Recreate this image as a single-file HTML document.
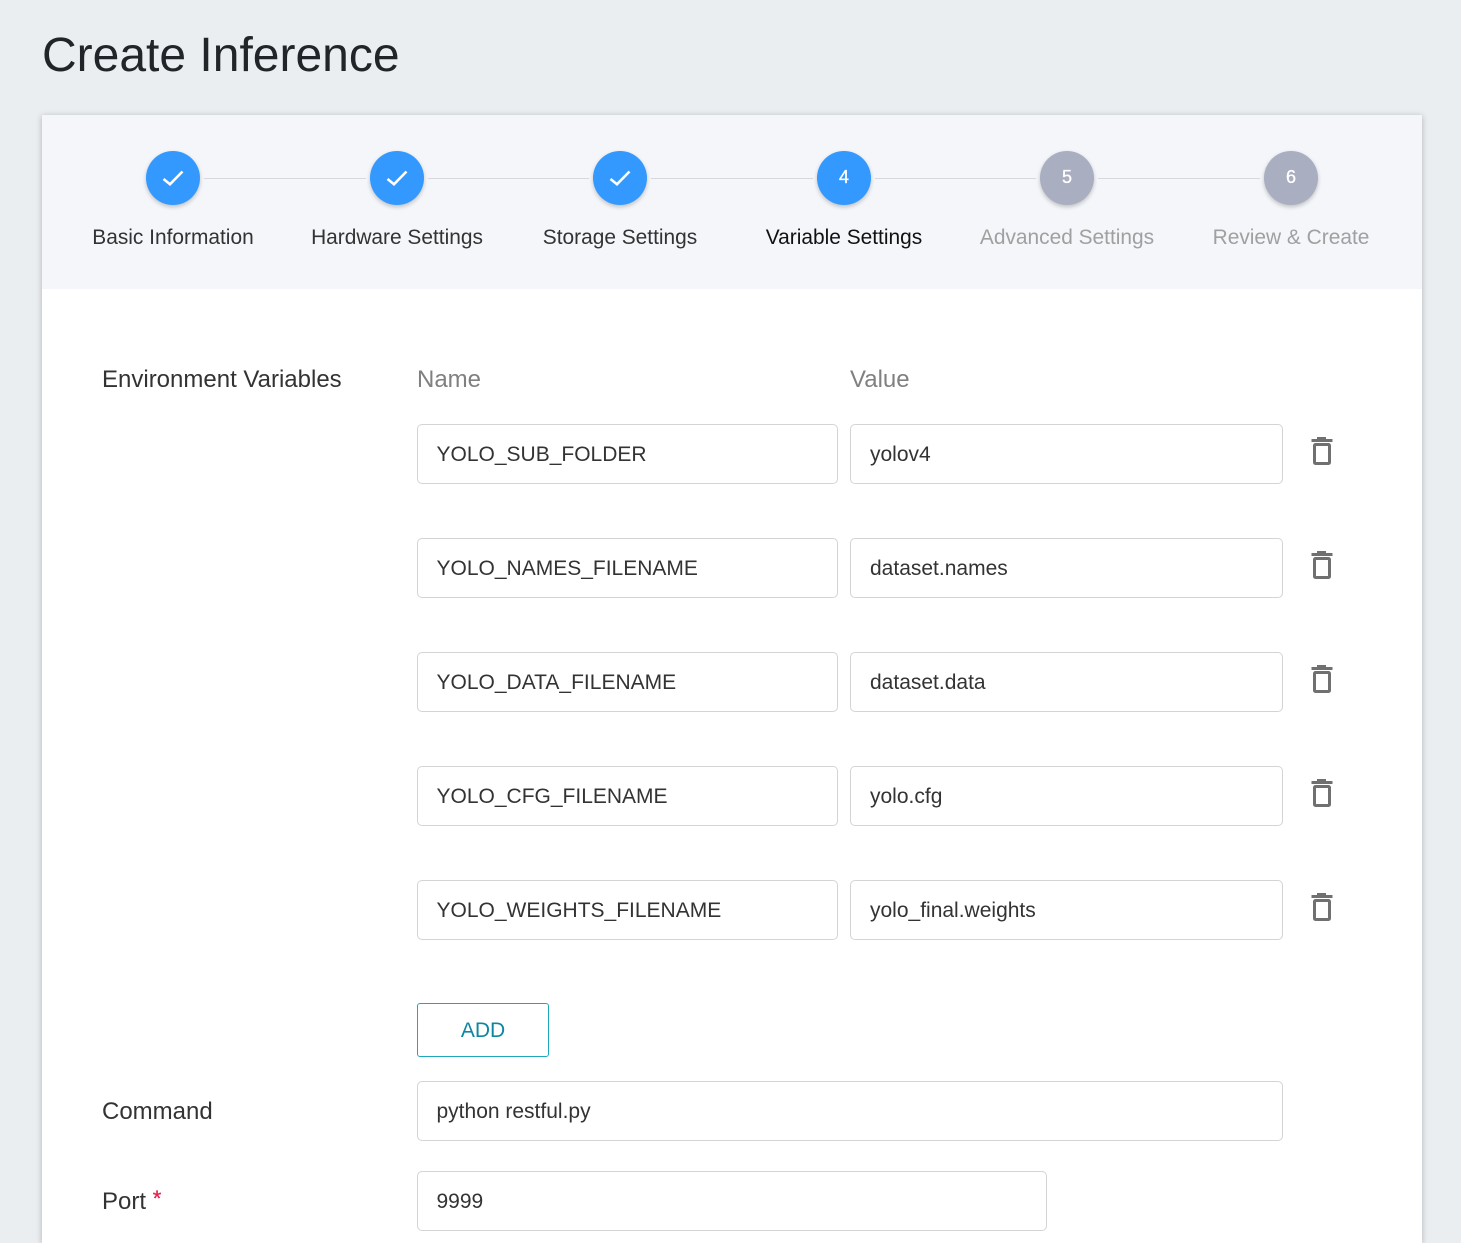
<!DOCTYPE html>
<html style="width:1461px;height:1243px;overflow:hidden"><head><meta charset="utf-8"><style>
*{box-sizing:border-box}
html,body{margin:0;padding:0}
body{width:1461px;height:1243px;overflow:hidden;background:#ebeef1;font-family:"Liberation Sans",Arial,sans-serif;position:relative;color:#333}
#w{position:absolute;left:0;top:0;width:1461px;height:1243px;overflow:hidden}
.a{position:absolute;white-space:nowrap}
h1{position:absolute;left:42px;top:27px;margin:0;font-weight:400;font-size:48px;line-height:58px;color:#212529;white-space:nowrap}
.card{position:absolute;left:42px;top:115px;width:1380px;height:1128px;background:#fff;box-shadow:0 1px 6px rgba(0,0,0,.25)}
.head{position:absolute;left:42px;top:115px;width:1380px;height:174px;background:#f4f6fa}
.c{position:absolute;top:151px;width:54px;height:54px;border-radius:50%;background:#3399ff;box-shadow:0 2px 4px rgba(0,0,0,.22);color:#fff;font-size:18px;text-align:center;line-height:52px;-webkit-text-stroke:.3px #fff}
.c.g{background:#a9afc1}
.c svg{position:absolute;left:16px;top:18px}
.ln{position:absolute;top:178px;height:1px;background:#d6d8de}
.st{position:absolute;top:225px;width:224px;text-align:center;font-size:20.9px;line-height:26px;color:#333;white-space:nowrap}
.lb{font-size:24px;line-height:30px;color:#333}
.gr{font-size:24px;line-height:30px;color:#808080}
.i{position:absolute;height:60px;background:#fff;border:1px solid #d4d4d4;border-radius:5px;padding-left:18.5px;font-size:21px;line-height:59px;color:#333;white-space:nowrap}
.n{left:417px;width:421px}
.v{left:850px;width:433px;padding-left:19px}
.t{position:absolute;left:1310px}
.btn{position:absolute;left:417px;top:1003px;width:132px;height:54px;border:1px solid #1fa8bd;border-radius:3px;color:#0f86a1;font-size:21px;line-height:54px;text-align:center}
</style></head><body><div id="w">
<h1>Create Inference</h1>
<div class="card"></div>
<div class="head"></div>
<div class="ln" style="left:204px;width:162px"></div>
<div class="ln" style="left:428px;width:161px"></div>
<div class="ln" style="left:651px;width:162px"></div>
<div class="ln" style="left:875px;width:161px"></div>
<div class="ln" style="left:1098px;width:162px"></div>
<div class="c" style="left:146px"><svg width="22" height="18" viewBox="0 0 22 18"><path d="M1.5 10L8 15.3L20.5 2.5" fill="none" stroke="#fff" stroke-width="2.6"/></svg></div>
<div class="c" style="left:370px"><svg width="22" height="18" viewBox="0 0 22 18"><path d="M1.5 10L8 15.3L20.5 2.5" fill="none" stroke="#fff" stroke-width="2.6"/></svg></div>
<div class="c" style="left:593px"><svg width="22" height="18" viewBox="0 0 22 18"><path d="M1.5 10L8 15.3L20.5 2.5" fill="none" stroke="#fff" stroke-width="2.6"/></svg></div>
<div class="c" style="left:817px">4</div>
<div class="c g" style="left:1040px">5</div>
<div class="c g" style="left:1264px">6</div>
<div class="st" style="left:61px">Basic Information</div>
<div class="st" style="left:285px">Hardware Settings</div>
<div class="st" style="left:508px">Storage Settings</div>
<div class="st" style="left:732px;color:#111">Variable Settings</div>
<div class="st" style="left:955px;color:#a0a0a0">Advanced Settings</div>
<div class="st" style="left:1179px;color:#a0a0a0">Review &amp; Create</div>
<div class="a lb" style="left:102px;top:365px">Environment Variables</div>
<div class="a gr" style="left:417px;top:365px">Name</div>
<div class="a gr" style="left:850px;top:365px">Value</div>
<div class="i n" style="top:424px">YOLO_SUB_FOLDER</div><div class="i v" style="top:424px">yolov4</div>
<svg class="t" style="top:436px" width="24" height="30" viewBox="0 0 24 30"><path d="M7 1H16V3H22.5V6H1.5V3H7Z" fill="#707070"/><rect x="4.5" y="8.5" width="15" height="19" rx="1" fill="none" stroke="#707070" stroke-width="3"/></svg>
<div class="i n" style="top:538px">YOLO_NAMES_FILENAME</div><div class="i v" style="top:538px">dataset.names</div>
<svg class="t" style="top:550px" width="24" height="30" viewBox="0 0 24 30"><path d="M7 1H16V3H22.5V6H1.5V3H7Z" fill="#707070"/><rect x="4.5" y="8.5" width="15" height="19" rx="1" fill="none" stroke="#707070" stroke-width="3"/></svg>
<div class="i n" style="top:652px">YOLO_DATA_FILENAME</div><div class="i v" style="top:652px">dataset.data</div>
<svg class="t" style="top:664px" width="24" height="30" viewBox="0 0 24 30"><path d="M7 1H16V3H22.5V6H1.5V3H7Z" fill="#707070"/><rect x="4.5" y="8.5" width="15" height="19" rx="1" fill="none" stroke="#707070" stroke-width="3"/></svg>
<div class="i n" style="top:766px">YOLO_CFG_FILENAME</div><div class="i v" style="top:766px">yolo.cfg</div>
<svg class="t" style="top:778px" width="24" height="30" viewBox="0 0 24 30"><path d="M7 1H16V3H22.5V6H1.5V3H7Z" fill="#707070"/><rect x="4.5" y="8.5" width="15" height="19" rx="1" fill="none" stroke="#707070" stroke-width="3"/></svg>
<div class="i n" style="top:880px">YOLO_WEIGHTS_FILENAME</div><div class="i v" style="top:880px">yolo_final.weights</div>
<svg class="t" style="top:892px" width="24" height="30" viewBox="0 0 24 30"><path d="M7 1H16V3H22.5V6H1.5V3H7Z" fill="#707070"/><rect x="4.5" y="8.5" width="15" height="19" rx="1" fill="none" stroke="#707070" stroke-width="3"/></svg>
<div class="btn">ADD</div>
<div class="a lb" style="left:102px;top:1097px">Command</div>
<div class="i" style="left:417px;top:1081px;width:866px">python restful.py</div>
<div class="a lb" style="left:102px;top:1187px">Port <span style="color:#e8234f;font-size:22px;position:relative;top:-3px;-webkit-text-stroke:.3px #e8234f">*</span></div>
<div class="i" style="left:417px;top:1171px;width:630px">9999</div>
</div></body></html>
